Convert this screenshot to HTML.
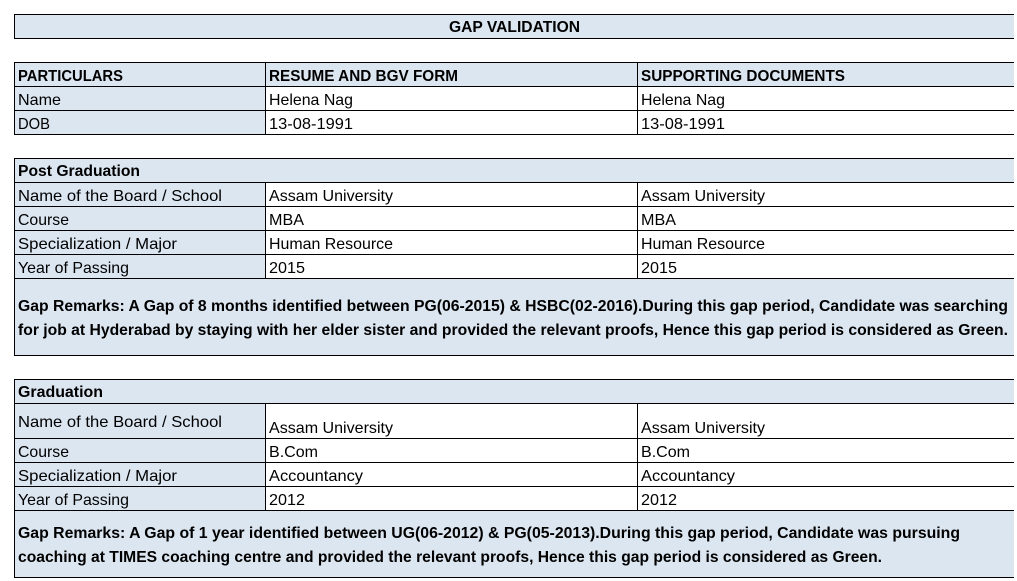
<!DOCTYPE html>
<html lang="en">
<head>
<meta charset="utf-8">
<title>Gap Validation</title>
<style>
html,body{margin:0;padding:0;background:#fff;width:1017px;height:581px;overflow:hidden}
svg{display:block;position:absolute;left:0;top:0}
text{font-family:"Liberation Sans",sans-serif;font-size:16px;fill:#000}
.b{font-weight:bold}
</style>
</head>
<body>
<svg width="1017" height="581" viewBox="0 0 1017 581" xmlns="http://www.w3.org/2000/svg">
<g fill="#dce6f1">
<rect x="14" y="14" width="1000" height="25"/>
<rect x="14" y="62" width="1000" height="25"/>
<rect x="14" y="86" width="252" height="49"/>
<rect x="14" y="158" width="1000" height="25"/>
<rect x="14" y="182" width="252" height="97"/>
<rect x="14" y="278" width="1000" height="78"/>
<rect x="14" y="379" width="1000" height="25"/>
<rect x="14" y="403" width="252" height="108"/>
<rect x="14" y="510" width="1000" height="68"/>
</g>
<g fill="#000">
<rect x="14" y="14" width="1000" height="1"/><rect x="14" y="38" width="1000" height="1"/>
<rect x="14" y="62" width="1000" height="1"/><rect x="14" y="86" width="1000" height="1"/>
<rect x="14" y="110" width="1000" height="1"/><rect x="14" y="134" width="1000" height="1"/>
<rect x="14" y="158" width="1000" height="1"/><rect x="14" y="182" width="1000" height="1"/>
<rect x="14" y="206" width="1000" height="1"/><rect x="14" y="230" width="1000" height="1"/>
<rect x="14" y="254" width="1000" height="1"/><rect x="14" y="278" width="1000" height="1"/>
<rect x="14" y="355" width="1000" height="1"/>
<rect x="14" y="379" width="1000" height="1"/><rect x="14" y="403" width="1000" height="1"/>
<rect x="14" y="438" width="1000" height="1"/><rect x="14" y="462" width="1000" height="1"/>
<rect x="14" y="486" width="1000" height="1"/><rect x="14" y="510" width="1000" height="1"/>
<rect x="14" y="577" width="1000" height="1"/>
<rect x="14" y="14" width="1" height="25"/>
<rect x="14" y="62" width="1" height="73"/>
<rect x="14" y="158" width="1" height="198"/>
<rect x="14" y="379" width="1" height="199"/>
<rect x="265" y="62" width="1" height="73"/><rect x="637" y="62" width="1" height="73"/>
<rect x="265" y="182" width="1" height="97"/><rect x="637" y="182" width="1" height="97"/>
<rect x="265" y="403" width="1" height="108"/><rect x="637" y="403" width="1" height="108"/>
</g>
<g>
<text class="b" x="449" y="32" textLength="131" lengthAdjust="spacingAndGlyphs">GAP VALIDATION</text>

<text class="b" x="18" y="81" textLength="105" lengthAdjust="spacingAndGlyphs">PARTICULARS</text>
<text class="b" x="269" y="81" textLength="189" lengthAdjust="spacingAndGlyphs">RESUME AND BGV FORM</text>
<text class="b" x="641" y="81" textLength="204" lengthAdjust="spacingAndGlyphs">SUPPORTING DOCUMENTS</text>

<text x="18" y="105" textLength="43" lengthAdjust="spacingAndGlyphs">Name</text>
<text x="269" y="105" textLength="84" lengthAdjust="spacingAndGlyphs">Helena Nag</text>
<text x="641" y="105" textLength="84" lengthAdjust="spacingAndGlyphs">Helena Nag</text>
<text x="18" y="129" textLength="32" lengthAdjust="spacingAndGlyphs">DOB</text>
<text x="269" y="129" textLength="84" lengthAdjust="spacingAndGlyphs">13-08-1991</text>
<text x="641" y="129" textLength="84" lengthAdjust="spacingAndGlyphs">13-08-1991</text>

<text class="b" x="18" y="176" textLength="122" lengthAdjust="spacingAndGlyphs">Post Graduation</text>
<text x="18" y="201" textLength="204" lengthAdjust="spacingAndGlyphs">Name of the Board / School</text>
<text x="269" y="201" textLength="124" lengthAdjust="spacingAndGlyphs">Assam University</text>
<text x="641" y="201" textLength="124" lengthAdjust="spacingAndGlyphs">Assam University</text>
<text x="18" y="225" textLength="51" lengthAdjust="spacingAndGlyphs">Course</text>
<text x="269" y="225" textLength="35" lengthAdjust="spacingAndGlyphs">MBA</text>
<text x="641" y="225" textLength="35" lengthAdjust="spacingAndGlyphs">MBA</text>
<text x="18" y="249" textLength="159" lengthAdjust="spacingAndGlyphs">Specialization / Major</text>
<text x="269" y="249" textLength="124" lengthAdjust="spacingAndGlyphs">Human Resource</text>
<text x="641" y="249" textLength="124" lengthAdjust="spacingAndGlyphs">Human Resource</text>
<text x="18" y="273" textLength="111" lengthAdjust="spacingAndGlyphs">Year of Passing</text>
<text x="269" y="273" textLength="36" lengthAdjust="spacingAndGlyphs">2015</text>
<text x="641" y="273" textLength="36" lengthAdjust="spacingAndGlyphs">2015</text>
<text class="b" x="18" y="311" textLength="990" lengthAdjust="spacingAndGlyphs">Gap Remarks: A Gap of 8 months identified between PG(06-2015) &amp; HSBC(02-2016).During this gap period, Candidate was searching</text>
<text class="b" x="18" y="335" textLength="990" lengthAdjust="spacingAndGlyphs">for job at Hyderabad by staying with her elder sister and provided the relevant proofs, Hence this gap period is considered as Green.</text>

<text class="b" x="18" y="397" textLength="85" lengthAdjust="spacingAndGlyphs">Graduation</text>
<text x="18" y="427" textLength="204" lengthAdjust="spacingAndGlyphs">Name of the Board / School</text>
<text x="269" y="433" textLength="124" lengthAdjust="spacingAndGlyphs">Assam University</text>
<text x="641" y="433" textLength="124" lengthAdjust="spacingAndGlyphs">Assam University</text>
<text x="18" y="457" textLength="51" lengthAdjust="spacingAndGlyphs">Course</text>
<text x="269" y="457" textLength="49" lengthAdjust="spacingAndGlyphs">B.Com</text>
<text x="641" y="457" textLength="49" lengthAdjust="spacingAndGlyphs">B.Com</text>
<text x="18" y="481" textLength="159" lengthAdjust="spacingAndGlyphs">Specialization / Major</text>
<text x="269" y="481" textLength="94" lengthAdjust="spacingAndGlyphs">Accountancy</text>
<text x="641" y="481" textLength="94" lengthAdjust="spacingAndGlyphs">Accountancy</text>
<text x="18" y="505" textLength="111" lengthAdjust="spacingAndGlyphs">Year of Passing</text>
<text x="269" y="505" textLength="36" lengthAdjust="spacingAndGlyphs">2012</text>
<text x="641" y="505" textLength="36" lengthAdjust="spacingAndGlyphs">2012</text>
<text class="b" x="18" y="538" textLength="942" lengthAdjust="spacingAndGlyphs">Gap Remarks: A Gap of 1 year identified between UG(06-2012) &amp; PG(05-2013).During this gap period, Candidate was pursuing</text>
<text class="b" x="18" y="562" textLength="864" lengthAdjust="spacingAndGlyphs">coaching at TIMES coaching centre and provided the relevant proofs, Hence this gap period is considered as Green.</text>
</g>
</svg>
</body>
</html>
